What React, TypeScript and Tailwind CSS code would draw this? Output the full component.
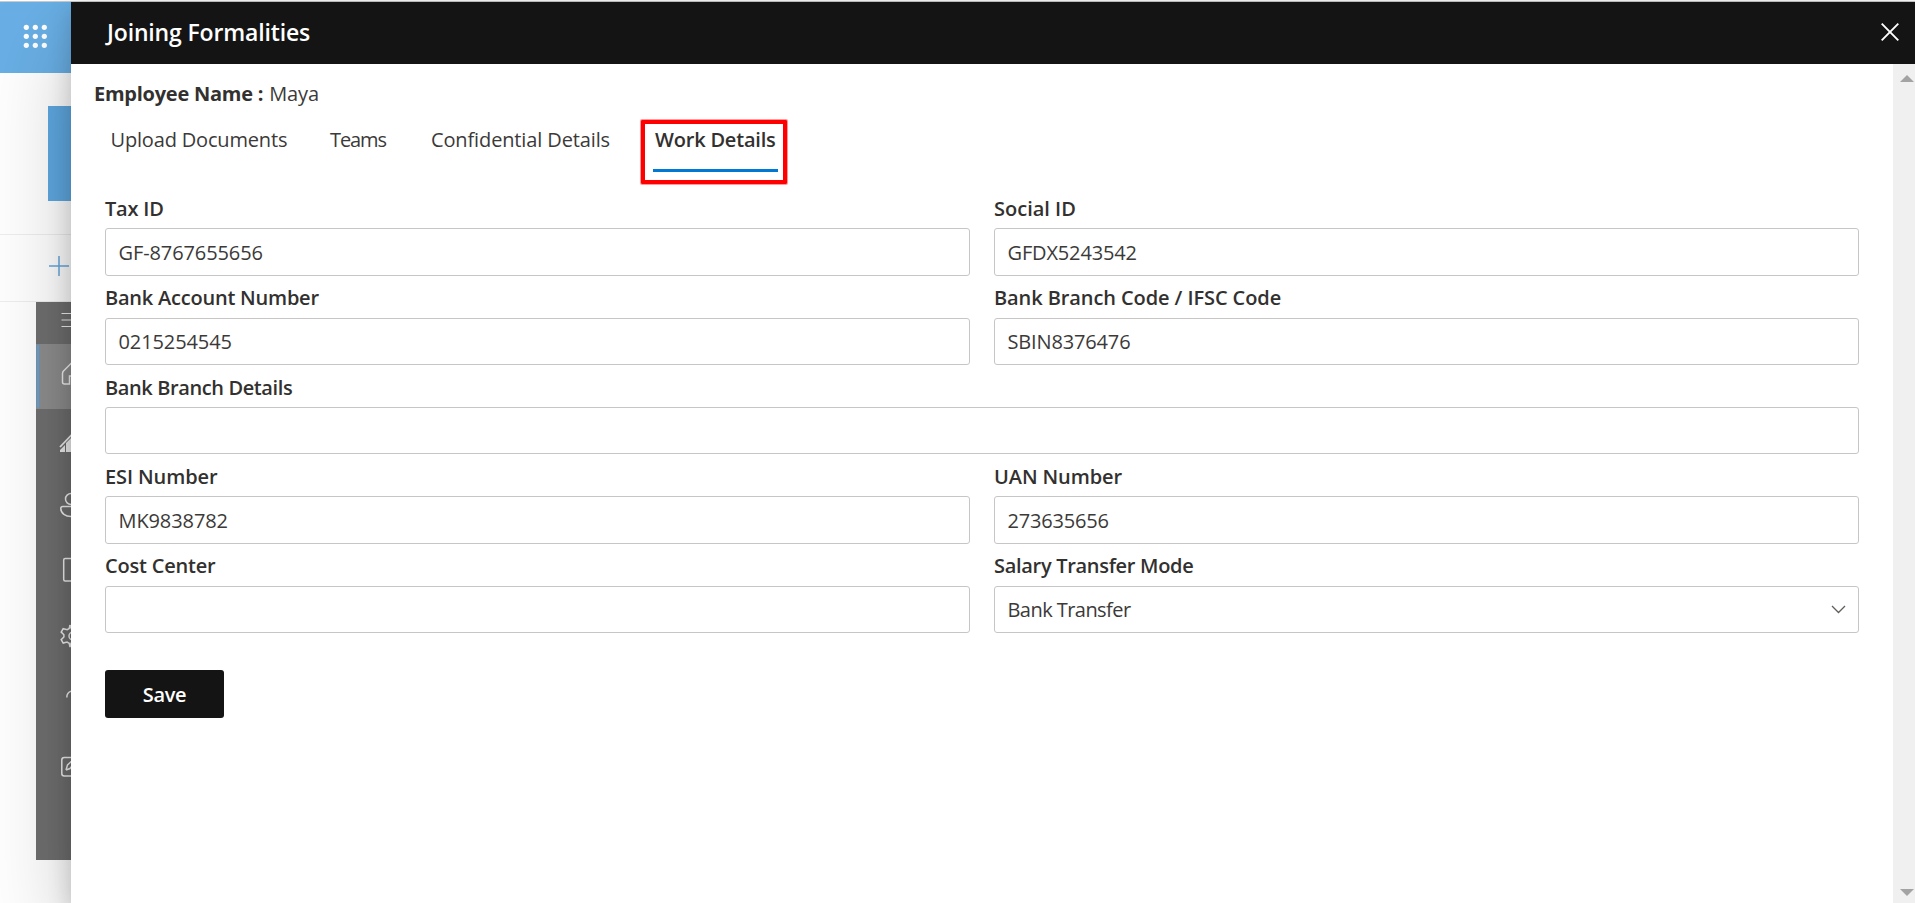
import React from "react";

type FieldProps = {
  label: string;
  value?: string;
  labelClass?: string;
  valueClass?: string;
  boxClass?: string;
  padClass?: string;
  select?: boolean;
};

function Field({
  label,
  value = "",
  labelClass = "",
  valueClass = "pt-px tracking-[-0.1px]",
  boxClass = "h-[47px]",
  padClass = "pt-[9px]",
  select,
}: FieldProps) {
  return (
    <label className="flex min-w-0 flex-1 flex-col">
      <span className={`h-[42px] text-[20px] leading-[27px] font-semibold text-[#323130] ${padClass}`}>
        <span className={labelClass}>{label}</span>
      </span>
      <span className={`flex items-center justify-between rounded-[3px] border border-[#c8c6c4] bg-white pr-3 pl-[12.5px] ${boxClass}`}>
        <span className={`text-[20px] text-[#3b3a39] ${valueClass}`}>{value}</span>
        {select && (
          <svg width="15" height="9" viewBox="0 0 15 9" fill="none" stroke="#605e5c" strokeWidth="1.3">
            <path d="M1 1l6.5 6.5L14 1" />
          </svg>
        )}
      </span>
    </label>
  );
}

function Sidebar() {
  return (
    <div className="ml-9 h-[558px] w-[60px] bg-[#6f6f6f]">
      <svg width="60" height="558" viewBox="36 302 60 558" fill="none" stroke="#f0f0f0" strokeWidth="1.5">
        <path d="M61.5 313.5H82M61.5 320H82M61.5 326.5H82" strokeWidth="1.2" />
        <path d="M36 344h60v65H36z" fill="#8d8d8d" stroke="none" />
        <path d="M37 346q0-1.500 2-1.500v63.500q-2 0-2-1.500z" fill="#5aa3e0" stroke="none" />
        <path d="M62.500 373.500q0-1.500 1-2.500L72 362.500l8.500 8.500q1 1 1 2.500V382q0 2-2 2h-4v-8h-6v8h-5q-2 0-2-2z" />
        <path d="M60 447l12-12.500 12 12.500" strokeWidth="1.8" />
        <path d="M60 452v-2l5-5v7zM66 452v-9l5-5v14z" fill="#eee" stroke="none" />
        <circle cx="71" cy="499" r="5.500" />
        <path d="M60.800 508.500q0-2 2-2h17v2c0 4-4 8-9 8s-10-3-10-8z" />
        <rect x="63.700" y="558.500" width="18" height="22.500" rx="1.500" />
        <path d="M70 625l1.300 3.600 3.400-.2 1 3.200M70 647l1-3.700 3.300.4M70 625l-.8 3.500-2 1.200-4-1-2 3.400 2.700 2.600v2.300l-2.700 2.700 2 3.400 3.800-1 2.200 1.200.8 3.700" />
        <circle cx="73" cy="636" r="4" />
        <path d="M66.800 697.500q0-5.500 5-6.500" />
        <rect x="61.800" y="757.500" width="19" height="18.500" rx="2.500" />
        <path d="M66 770l1.500-5 5.500-5M66 770l4-1.500 3-4" />
      </svg>
    </div>
  );
}

function Background() {
  return (
    <div className="h-[901px] w-[71px] shrink-0 overflow-hidden bg-white">
      <div className="flex h-[71px] items-center bg-[#69afe5] pl-[23px]">
        <svg width="25" height="25" viewBox="0 0 25 25" fill="#fff" className="-mt-0.5">
          {[3, 12, 21].map((y) => [3, 12, 21].map((x) => <circle key={`${x}-${y}`} cx={x + 0.3} cy={y + 0.3} r="2.600" />))}
        </svg>
      </div>
      <div className="h-[162px] border-b border-[#eeeeee] pt-[33px] pl-12">
        <div className="h-[95px] bg-[#5fa9e2]" />
      </div>
      <div className="h-[67px] border-b border-[#eeeeee] pt-[21px] pl-[49px]">
        <svg width="20" height="20" viewBox="0 0 20 20" stroke="#66a8df" strokeWidth="1.500">
          <path d="M0 10h20M10 0v20" />
        </svg>
      </div>
      <Sidebar />
    </div>
  );
}

export default function App() {
  return (
    <div className="h-[903px] w-[1915px] overflow-hidden bg-white font-['Open_Sans',sans-serif]">
      <div className="h-[2px] border-b border-[#c8cccf] bg-white" />
      <div className="flex h-[901px]">
        <Background />
        <main className="relative z-10 flex flex-1 flex-col bg-white shadow-[0_38px_86px_0_rgba(0,0,0,0.22),0_7px_22px_0_rgba(0,0,0,0.18)]">
          <header className="flex h-[62px] items-center justify-between bg-[#141414] pr-[16px] pl-[36px]">
            <h1 className="-mt-px text-[23px] font-semibold tracking-[-0.15px] text-white">Joining Formalities</h1>
            <svg width="18" height="18" viewBox="0 0 18 18" stroke="#fff" strokeWidth="1.900" className="-mt-0.5">
              <path d="M.7.7l16.600 16.600M17.300.7L.7 17.300" />
            </svg>
          </header>
          <div className="flex flex-1">
            <div className="w-[1822px] pl-[23px]">
              <div className="flex h-[55px] gap-[6px] pt-[16px] text-[20px] leading-[27px] text-[#3b3a39]">
                <b className="font-bold tracking-[-0.25px] text-[#323130]">Employee Name :</b>
                <span className="tracking-[-0.1px]">Maya</span>
              </div>
              <nav className="flex h-[67px] text-[20px] leading-[27px] text-[#3b3a39]">
                <span className="w-[219px] pt-[7px] pl-[16.5px] tracking-[-0.17px]">Upload Documents</span>
                <span className="w-[101px] pt-[7px] pl-[17px] tracking-[-1.1px]">Teams</span>
                <span className="w-[227px] pt-[7px] pl-[17px] tracking-[-0.13px]">Confidential Details</span>
                <div className="mt-px h-[64px] w-[146px] rounded-[1px] border-4 border-[#ff0000] pt-[2px] pr-[5px] pl-[8px] shadow-[0_0_0_1px_rgba(255,0,0,0.4)]">
                  <div className="h-[46px] border-b-[3px] border-[#0078d4] pl-[2px] font-semibold tracking-[-0.2px] whitespace-nowrap text-[#323130]">Work Details</div>
                </div>
              </nav>
              <form className="ml-[11px] w-[1754px]">
                <div className="flex gap-6">
                  <Field label="Tax ID" value="GF-8767655656" labelClass="tracking-[-0.2px]" boxClass="h-[48px]" />
                  <Field label="Social ID" value="GFDX5243542" boxClass="h-[48px]" valueClass="pt-px tracking-[-0.15px]" />
                </div>
                <div className="flex gap-6">
                  <Field label="Bank Account Number" value="0215254545" labelClass="tracking-[-0.22px]" padClass="pt-[8px]" />
                  <Field label="Bank Branch Code / IFSC Code" value="SBIN8376476" labelClass="tracking-[-0.09px]" padClass="pt-[8px]" valueClass="pt-px tracking-[-0.15px]" />
                </div>
                <div className="flex">
                  <Field label="Bank Branch Details" labelClass="tracking-[-0.39px]" />
                </div>
                <div className="flex gap-6">
                  <Field label="ESI Number" value="MK9838782" labelClass="tracking-[-0.1px]" boxClass="h-[48px]" />
                  <Field label="UAN Number" value="273635656" labelClass="tracking-[-0.1px]" boxClass="h-[48px]" valueClass="pt-px tracking-[-0.2px]" />
                </div>
                <div className="flex gap-6">
                  <Field label="Cost Center" labelClass="tracking-[-0.2px]" padClass="pt-[8px]" />
                  <Field label="Salary Transfer Mode" value="Bank Transfer" labelClass="tracking-[-0.3px]" padClass="pt-[8px]" valueClass="tracking-[-0.55px]" select />
                </div>
                <button type="button" className="mt-[37px] h-[48px] w-[119px] rounded-[3px] bg-[#141414] pt-px text-[20px] font-semibold tracking-[-0.3px] text-white">
                  Save
                </button>
              </form>
            </div>
            <div className="flex w-[22px] flex-col items-end justify-between bg-[#f0f0f0] pt-[11px] pr-px pb-[7px]">
              <svg width="14" height="7" viewBox="0 0 14 7" fill="#a3a3a3"><path d="M0 7L7 0l7 7z" /></svg>
              <svg width="14" height="7" viewBox="0 0 14 7" fill="#a3a3a3"><path d="M0 0l7 7 7-7z" /></svg>
            </div>
          </div>
        </main>
      </div>
    </div>
  );
}
